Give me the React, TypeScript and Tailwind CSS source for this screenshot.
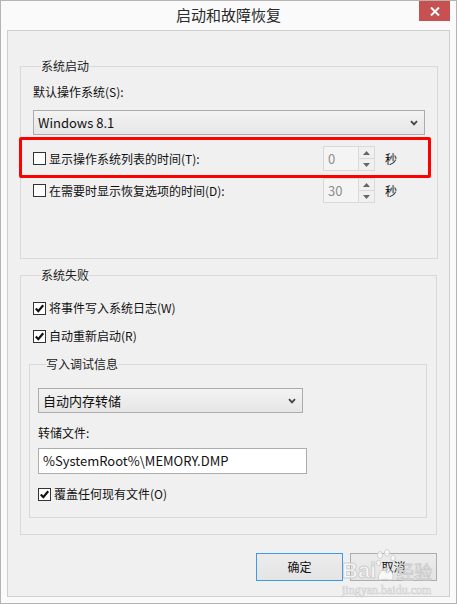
import type { ReactNode } from "react";

const FONT = "font-['Noto_Sans_CJK_SC','Noto_Sans',sans-serif]";

function CheckBox({ checked }: { checked?: boolean }) {
  return (
    <span className="w-[13px] h-[13px] border border-[#333] bg-white flex items-center justify-center shrink-0">
      {checked && (
        <svg width="11" height="11" viewBox="0 0 11 11">
          <path d="M1.8 5.6 L4.3 8.2 L9.2 2.2" fill="none" stroke="#111" strokeWidth="2.2" />
        </svg>
      )}
    </span>
  );
}

function CheckRow({ checked, children }: { checked?: boolean; children: ReactNode }) {
  return (
    <div className="flex items-center gap-[3px] h-[16px]">
      <CheckBox checked={checked} />
      <span className="leading-[16px]">{children}</span>
    </div>
  );
}

function Combo({ value, width }: { value: string; width: string }) {
  return (
    <div
      className={`${width} h-[25px] border border-[#acacac] bg-gradient-to-b from-[#f3f3f3] to-[#e6e6e6] flex items-center pl-[4px] pr-[6px]`}
    >
      <span className="flex-1 text-[13px] leading-[16px]">{value}</span>
      <svg width="8" height="6" viewBox="0 0 8 6">
        <path d="M1 1.2 L4 4.4 L7 1.2" fill="none" stroke="#444" strokeWidth="1.8" />
      </svg>
    </div>
  );
}

function Spin({ value }: { value: string }) {
  return (
    <div className="flex w-[52px] h-[25px] border border-[#d9d9d9] bg-[#f4f4f4]">
      <span className="flex-1 pl-[4px] text-[13px] leading-[23px] text-[#8e8e8e]">{value}</span>
      <div className="w-[16px] flex flex-col border-l border-[#d9d9d9]">
        <div className="flex-1 border-b border-[#d9d9d9] bg-[#f0f0f0] flex items-center justify-center">
          <svg width="7" height="4" viewBox="0 0 7 4">
            <path d="M0 4 L3.5 0 L7 4 Z" fill="#666" />
          </svg>
        </div>
        <div className="flex-1 bg-[#f0f0f0] flex items-center justify-center">
          <svg width="7" height="4" viewBox="0 0 7 4">
            <path d="M0 0 L3.5 4 L7 0 Z" fill="#666" />
          </svg>
        </div>
      </div>
    </div>
  );
}

function TimeRow({ label, value }: { label: string; value: string }) {
  return (
    <div className="flex items-center h-[25px]">
      <div className="flex-1">
        <CheckRow>{label}</CheckRow>
      </div>
      <Spin value={value} />
      <span className="w-[50px] pl-[10px] leading-[16px]">秒</span>
    </div>
  );
}

function Group({ title, className, children }: { title: string; className: string; children: ReactNode }) {
  return (
    <fieldset className={`border border-[#d9d9d9] ${className}`}>
      <legend className="ml-[8px] leading-[16px] text-[12px] text-[#222]">{title}</legend>
      {children}
    </fieldset>
  );
}

export default function App() {
  return (
    <div className={`${FONT} relative w-[457px] h-[604px] border border-[#b4b4b4] bg-[#fafafa] flex flex-col text-[12px] text-[#111]`}>
      {/* title bar */}
      <div className="h-[29px] flex items-center justify-center text-[15px] text-[#2a2a2a]">
        启动和故障恢复
      </div>
      <button className="absolute top-0 right-[6px] w-[31px] h-[20px] bg-[#c75050] flex items-center justify-center">
        <svg width="10" height="9" viewBox="0 0 10 9">
          <path d="M1 0.5 L9 8.5 M9 0.5 L1 8.5" stroke="#fff" strokeWidth="2" />
        </svg>
      </button>

      {/* body */}
      <div className="mx-[6px] mb-[6px] flex-1 border border-[#cfcfcf] bg-[#f0f0f0] flex flex-col">
        <Group title="系统启动" className="mx-[12px] mt-[27px] h-[201px] px-[12px]">
          <div className="mt-[10px] leading-[16px]">默认操作系统(S):</div>
          <div className="mt-[10px]">
            <Combo value="Windows 8.1" width="w-[392px]" />
          </div>
          <div className="mt-[11px]">
            <TimeRow label="显示操作系统列表的时间(T):" value="0" />
          </div>
          <div className="mt-[7px]">
            <TimeRow label="在需要时显示恢复选项的时间(D):" value="30" />
          </div>
        </Group>

        <Group title="系统失败" className="mx-[12px] mt-[8px] h-[268px] pl-[12px] pr-[9px]">
          <div className="mt-[17px]">
            <CheckRow checked>将事件写入系统日志(W)</CheckRow>
          </div>
          <div className="mt-[12px]">
            <CheckRow checked>自动重新启动(R)</CheckRow>
          </div>
          <Group title="写入调试信息" className="-ml-[4px] mt-[12px] h-[162px] px-[8px]">
            <div className="mt-[16px]">
              <Combo value="自动内存转储" width="w-[265px]" />
            </div>
            <div className="mt-[12px] leading-[16px]">转储文件:</div>
            <div className="mt-[7px] w-[269px] h-[26px] border border-[#acacac] bg-white pl-[4px] text-[13px] leading-[24px]">
              %SystemRoot%\MEMORY.DMP
            </div>
            <div className="mt-[12px]">
              <CheckRow checked>覆盖任何现有文件(O)</CheckRow>
            </div>
          </Group>
        </Group>

        <div className="mt-[18px] mr-[12px] flex justify-end gap-[7px]">
          <button className="w-[87px] h-[28px] border border-[#3c9be8] bg-gradient-to-b from-[#ececec] to-[#e4e4e4] text-[12px]">
            确定
          </button>
          <button className="w-[87px] h-[28px] border border-[#acacac] bg-gradient-to-b from-[#ececec] to-[#e4e4e4] text-[12px]">
            取消
          </button>
        </div>
      </div>

      {/* annotation */}
      <div className="absolute left-[18px] top-[136px] w-[412px] h-[41px] border-[3px] border-[#ff0000] rounded-[2px]" />

      {/* watermark */}
      <div className="absolute left-[341px] top-[548px] flex flex-col items-start pointer-events-none">
        <div className="flex items-end h-[34px]">
          <span className="text-[22px] leading-[24px] font-['Liberation_Sans',sans-serif] font-bold text-white/70 [-webkit-text-stroke:1px_#cfcfcf]">
            Bai
          </span>
          <svg width="20" height="33" viewBox="0 0 20 33" className="mb-[1px]">
            <g fill="rgba(255,255,255,0.7)" stroke="#cfcfcf" strokeWidth="1">
              <ellipse cx="4" cy="6" rx="2.5" ry="3.5" />
              <ellipse cx="11" cy="4" rx="2.5" ry="3.5" />
              <ellipse cx="17" cy="9" rx="2.3" ry="3" />
              <ellipse cx="2.5" cy="14" rx="2" ry="2.8" />
              <path d="M4 31 C1 31 2 25 6 21 C9 18 13 18 15 22 C18 26 18 31 14 31 C11 30 8 30 4 31 Z" />
            </g>
          </svg>
          <span className="text-[18px] leading-[24px] text-white/70 [-webkit-text-stroke:0.8px_#c8c8c8]">
            经验
          </span>
        </div>
        <span className="text-[12px] leading-[14px] font-['Liberation_Serif',serif] text-white/70 [-webkit-text-stroke:0.6px_#cfcfcf]">
          jingyan.baidu.com
        </span>
      </div>
    </div>
  );
}
